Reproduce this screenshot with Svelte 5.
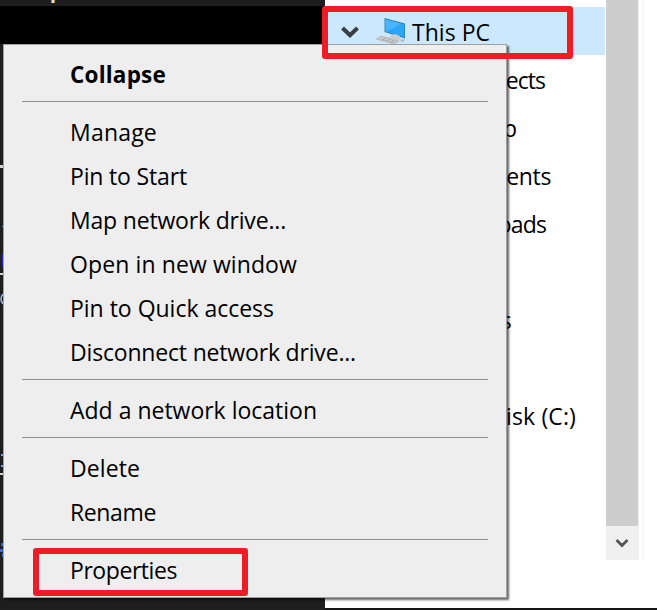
<script>
  const groups = [
    [{ label: 'Collapse', width: 96, bold: true }],
    [
      { label: 'Manage', width: 87 },
      { label: 'Pin to Start', width: 117 },
      { label: 'Map network drive...', width: 216 },
      { label: 'Open in new window', width: 227 },
      { label: 'Pin to Quick access', width: 204 },
      { label: 'Disconnect network drive...', width: 286 }
    ],
    [{ label: 'Add a network location', width: 247 }],
    [{ label: 'Delete', width: 70 }, { label: 'Rename', width: 86 }],
    [{ label: 'Properties', width: 107 }]
  ];

  // end: where the label stops, measured from the tree's left edge.
  const folders = [
    { label: '3D Objects', width: 107, end: 220 },
    { label: 'Desktop', width: 82, end: 191 },
    { label: 'Documents', width: 120, end: 226 },
    { label: 'Downloads', width: 112, end: 221 },
    { label: 'Music', width: 58, end: 170 },
    { label: 'Pictures', width: 80, end: 186 },
    { label: 'Videos', width: 66, end: 178 },
    { label: 'Local Disk (C:)', width: 149, end: 251 }
  ];

  // Tracks a label so that it fills the given width.
  function fit(node, width) {
    const natural = node.getBoundingClientRect().width;
    node.style.letterSpacing = `${(width - natural) / node.textContent.length}px`;
  }
</script>

<div class="screen">
  <div class="editor">
    <div class="tab"></div>
    <div class="band"></div>
    <svg class="code" width="325" height="610">
      <path d="M51 0h1v3h-1z" fill="#569cd6" /><path d="M52 0h2v3h-2z" fill="#ddd" /><path d="M54 0h1v3h-1z" fill="#c58a20" />
      <path d="M0 165h3v3H0zM0 273h3v2H0zM0 473h3v2H0z" fill="#d4d4d4" />
      <path d="M2 226h1v1H2zM1 454h2v2H1zM1 465h2v2H1z" fill="#69a9d8" />
      <path d="M2 254h1v13H2z" fill="#2929b8" />
      <path d="M3 294q-4 5 0 10" stroke="#9dbce9" fill="none" stroke-width="1.5" />
      <path d="M1 543h2v3H1zM0 549h3v3H0zM2 553h1v4H2z" fill="#3967d5" />
      <path d="M321 33h4v2h-4z" fill="#222" />
    </svg>
  </div>
  <div class="explorer">
    <div class="panes">
      <div class="tree">
        <div class="row root">
          <svg class="chevron" width="18" height="12" viewBox="0 0 18 12"><path d="M1.5 2 9 9.2 16.5 2" fill="none" stroke="#383d42" stroke-width="4" /></svg>
          <svg class="pc" width="32" height="30" viewBox="0 0 32 30">
            <path d="M9.5 2 30 7.5V22.5L9.5 16z" fill="#2b87bf" />
            <path d="M10.5 3.5 29 8.5V21L10.5 15.3z" fill="#2ba5f5" />
            <path d="M10.5 3.5 26 7.8 12 15.6 10.5 15.3z" fill="#4ab5fa" />
            <path d="m16 19 4-1 5 2-1 2 4 1-5 2-9-3z" fill="#c9cdd0" />
            <path d="m1 23 5-3 18 5-5 3z" fill="#dadddf" stroke="#aeb2b5" stroke-width=".7" />
            <path d="m3 22.5 17 4.5M5 21l17 4.8M6 25l5-3M11 26l5-3M15 27l5-3" stroke="#999" stroke-width=".6" />
            <path d="m25 25 3-2 2 1-3 2z" fill="#aeb2b5" />
          </svg>
          <span use:fit={78}>This PC</span>
        </div>
        {#each folders as f}
          <div class="row" style="padding-left: {f.end - f.width}px"><span use:fit={f.width}>{f.label}</span></div>
        {/each}
      </div>
      <div class="scroll">
        <div class="thumb"></div>
        <div class="down">
          <svg width="14" height="11" viewBox="0 0 14 11"><path d="M1.5 2 7 7.5 12.5 2" fill="none" stroke="#555" stroke-width="2.8" /></svg>
        </div>
      </div>
      <div class="divider"></div>
    </div>
    <div class="bottom"></div>
  </div>

  <div class="menu">
    {#each groups as group, i}
      {#if i}<div class="sep"></div>{/if}
      {#each group as item}
        <div class="item" class:bold={item.bold}><span use:fit={item.width}>{item.label}</span></div>
      {/each}
    {/each}
  </div>

  <div class="mark top"></div>
  <div class="mark low"></div>
</div>

<style>
  .screen {
    position: relative;
    display: flex;
    width: 657px;
    height: 610px;
    overflow: hidden;
    background: #fff;
    color: #000;
    font: 23px/42px 'Open Sans', 'Noto Sans', sans-serif;
    white-space: nowrap;
  }
  .editor { position: relative; width: 325px; background: #1e1e1e; }
  .tab { height: 6px; }
  .band { height: 38px; background: #000; }
  .code { position: absolute; left: 0; top: 0; }
  .explorer { display: flex; flex-direction: column; width: 332px; }
  .panes { display: flex; flex: 1; align-items: flex-start; }
  .tree { width: 281px; padding-top: 7px; box-sizing: border-box; }
  .row { display: flex; align-items: center; width: 280px; height: 48px; box-sizing: border-box; line-height: 46px; }
  .root { padding-left: 16px; background: #cce8ff; }
  .chevron { flex: none; margin-right: 16px; margin-top: 2px; }
  .pc { flex: none; margin-right: 5px; }
  .row span { margin-top: 1px; }
  .scroll { width: 33px; height: 560px; background: #f0f0f0; }
  .thumb { width: 32px; height: 526px; background: #cdcdcd; }
  .down { display: flex; align-items: center; justify-content: center; height: 34px; padding-right: 1px; }
  .divider { width: 2px; height: 560px; margin-left: 3px; background: #f7f7f7; }
  .bottom { height: 2px; background: #151515; }
  .menu {
    position: absolute;
    left: 3px;
    top: 44px;
    width: 504px;
    height: 554px;
    box-sizing: border-box;
    padding: 8px 18px 4px;
    border: 1px solid #a0a0a0;
    background: #eee;
    box-shadow: 2px 2px 2px rgba(0, 0, 0, .6);
  }
  .item { height: 44px; padding-left: 48px; }
  .item span { display: inline-block; }
  .bold { font-weight: 700; font-size: 22.5px; line-height: 44px; }
  .sep { height: 1px; margin: 4px 0 9px; background: #919191; }
  .mark { position: absolute; box-sizing: border-box; border: 6px solid #ee1c25; border-radius: 3px; }
  .top { left: 322px; top: 6px; width: 251px; height: 53px; }
  .low { left: 33px; top: 548px; width: 215px; height: 48px; }
</style>
